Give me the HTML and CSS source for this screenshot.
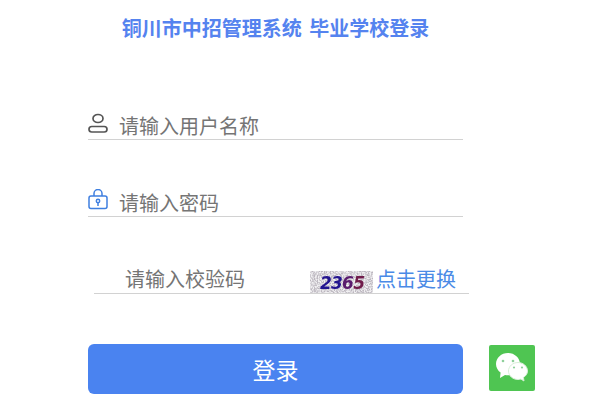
FILE: index.html
```html
<!DOCTYPE html>
<html lang="zh-CN">
<head>
    <meta charset="UTF-8">
    <meta name="viewport" content="width=device-width, initial-scale=1.0">
    <title>毕业学校登录</title>
    <link rel="stylesheet" href="styles.css">
</head>
<body>
    <div class="login">
        <h1 class="title">铜川市中招管理系统 毕业学校登录</h1>
        <div class="field field-user">
            <svg class="field-icon" width="20" height="22" viewBox="0 0 20 22" fill="none" stroke="#555" stroke-width="1.7">
                <ellipse cx="10" cy="6.500" rx="5" ry="4"/>
                <rect x="1" y="14.500" width="18" height="5.500" rx="2.750"/>
            </svg>
            <span class="placeholder">请输入用户名称</span>
        </div>
        <div class="field field-pass">
            <svg class="field-icon" width="20" height="22" viewBox="0 0 20 22" fill="none" stroke="#3f7fe0" stroke-width="1.5">
                <path d="M6 7V4.500a4 4 0 0 1 8 0V7"/>
                <rect x="1" y="7" width="18" height="12.500" rx="2"/>
                <circle cx="10" cy="12" r="1.700"/>
                <path d="M10 14v3"/>
            </svg>
            <span class="placeholder">请输入密码</span>
        </div>
        <div class="field field-code">
            <span class="placeholder">请输入校验码</span>
            <svg class="captcha" width="63" height="22" viewBox="0 0 63 22">
                <defs>
                    <filter id="noise" x="0" y="0" width="100%" height="100%">
                        <feTurbulence type="fractalNoise" baseFrequency="0.7" numOctaves="2" seed="7"/>
                        <feColorMatrix type="matrix" values="0 0 0 0 0.5  0 0 0 0 0.47  0 0 0 0 0.52  2.400 2.400 0 0 -1.950"/>
                    </filter>
                    <filter id="soft">
                        <feGaussianBlur stdDeviation="0.400"/>
                    </filter>
                </defs>
                <rect width="63" height="22" fill="#f1f0f2"/>
                <rect width="63" height="22" filter="url(#noise)"/>
                <text class="captcha-text" x="10" y="17.500" textLength="45" filter="url(#soft)"><tspan fill="#23128f">23</tspan><tspan fill="#5a1a6e">6</tspan><tspan fill="#701c4c">5</tspan></text>
            </svg>
            <span class="refresh">点击更换</span>
        </div>
        <div class="actions">
            <button class="submit">登录</button>
            <div class="wechat">
                <svg width="32" height="30" viewBox="0 0 32 30">
                    <path d="M12 0C5.400 0 0 4.900 0 11c0 3.500 1.800 6.600 4.600 8.600L4 25l5-3c1 .2 2 .3 3 .3 6.600 0 12-5 12-11.200S18.600 0 12 0z" fill="#fff"/>
                    <path d="M22 9.500c-5.200 0-9.500 3.800-9.500 8.500s4.300 8.500 9.500 8.500c1 0 2-.1 2.900-.4L28 28l-.6-3.600c2.500-1.500 4.100-3.700 4.100-6.400 0-4.700-4.300-8.500-9.500-8.500z" fill="#fff" stroke="#d8efd8" stroke-width="1"/>
                    <g fill="#8fd09b">
                        <circle cx="7" cy="8" r="1.300"/>
                        <circle cx="17" cy="8" r="1.300"/>
                        <circle cx="18" cy="14.500" r="1.100"/>
                        <circle cx="26" cy="14.500" r="1.100"/>
                    </g>
                </svg>
            </div>
        </div>
    </div>
</body>
</html>
```

FILE: styles.css
```css
body {
    margin: 0;
    background: #fff;
    font-family: "Liberation Sans", "Noto Sans CJK SC", sans-serif;
}
.login {
    width: 447px;
    margin-left: 88px;
}
.title {
    width: 375px;
    height: 41px;
    margin: 0;
    padding-top: 15px;
    font-size: 20px;
    line-height: 28px;
    font-weight: bold;
    word-spacing: 2px;
    text-align: center;
    color: #5583ef;
}
.field {
    display: flex;
    align-items: center;
    width: 375px;
    height: 28px;
    border-bottom: 1px solid #d2d2d2;
}
.field-user {
    margin-top: 55px;
}
.field-pass {
    margin-top: 48px;
}
.field-code {
    margin-top: 48px;
    margin-left: 6px;
}
.field-icon {
    flex: none;
    margin-right: 11px;
    margin-bottom: 4px;
}
.placeholder {
    font-size: 20px;
    color: #757575;
}
.field-code .placeholder {
    width: 185px;
    margin-left: 31px;
    padding-bottom: 2px;
}
.captcha {
    flex: none;
    align-self: flex-end;
    margin-right: 3px;
}
.captcha-text {
    font-family: "DejaVu Sans", sans-serif;
    font-size: 17px;
    font-weight: bold;
    font-style: italic;
}
.refresh {
    font-size: 20px;
    color: #4a8ae6;
    padding-bottom: 2px;
}
.actions {
    display: flex;
    align-items: flex-start;
    margin-top: 50px;
}
.submit {
    width: 375px;
    height: 50px;
    border: none;
    border-radius: 6px;
    background: #4a83f0;
    color: #fff;
    font-family: inherit;
    font-size: 23px;
    cursor: pointer;
}
.wechat {
    display: flex;
    align-items: center;
    justify-content: center;
    width: 46px;
    height: 46px;
    margin-top: 1px;
    margin-left: 26px;
    border-radius: 2px;
    background: #4fc552;
}
```
